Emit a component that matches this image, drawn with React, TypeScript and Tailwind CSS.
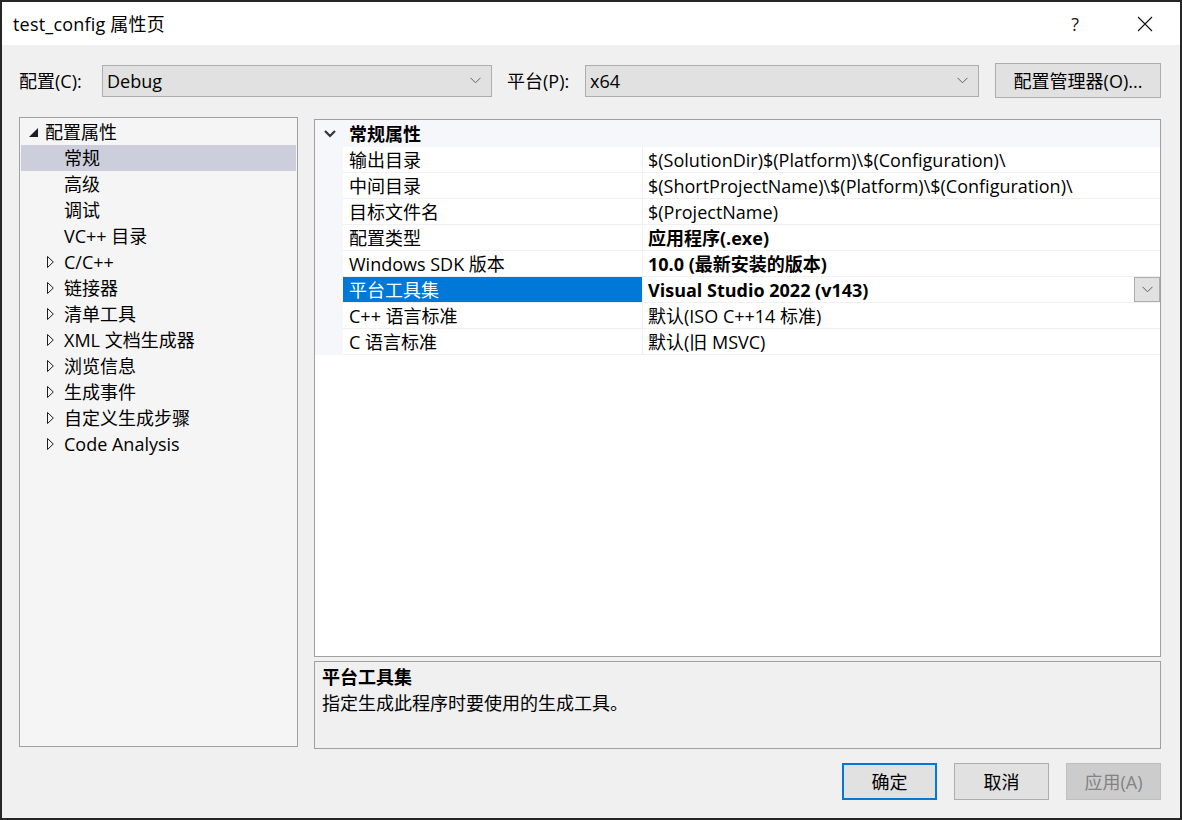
import { Fragment } from 'react';

const font = { fontFamily: '"Open Sans", "Noto Sans CJK SC", sans-serif' };

function Chevron({ className = '' }: { className?: string }) {
  return (
    <svg width="11" height="7" viewBox="0 0 11 7" className={className}>
      <path d="M0.5 0.8 L5.5 5.8 L10.5 0.8" fill="none" stroke="currentColor" strokeWidth="1" />
    </svg>
  );
}

function Combo({ value, width }: { value: string; width: string }) {
  return (
    <div className={`${width} h-[32px] bg-[#e1e1e1] border border-[#adadad] flex items-center justify-between pl-[4px] pr-[10px]`}>
      <span>{value}</span>
      <Chevron className="text-[#606060]" />
    </div>
  );
}

const tree: { label: string; level: 0 | 1 | 2; expander?: 'open' | 'closed'; selected?: boolean }[] = [
  { label: '配置属性', level: 0, expander: 'open' },
  { label: '常规', level: 1, selected: true },
  { label: '高级', level: 1 },
  { label: '调试', level: 1 },
  { label: 'VC++ 目录', level: 1 },
  { label: 'C/C++', level: 1, expander: 'closed' },
  { label: '链接器', level: 1, expander: 'closed' },
  { label: '清单工具', level: 1, expander: 'closed' },
  { label: 'XML 文档生成器', level: 1, expander: 'closed' },
  { label: '浏览信息', level: 1, expander: 'closed' },
  { label: '生成事件', level: 1, expander: 'closed' },
  { label: '自定义生成步骤', level: 1, expander: 'closed' },
  { label: 'Code Analysis', level: 1, expander: 'closed' },
];

const props: { name: string; value: string; bold?: boolean; selected?: boolean }[] = [
  { name: '输出目录', value: '$(SolutionDir)$(Platform)\\$(Configuration)\\' },
  { name: '中间目录', value: '$(ShortProjectName)\\$(Platform)\\$(Configuration)\\' },
  { name: '目标文件名', value: '$(ProjectName)' },
  { name: '配置类型', value: '应用程序(.exe)', bold: true },
  { name: 'Windows SDK 版本', value: '10.0 (最新安装的版本)', bold: true },
  { name: '平台工具集', value: 'Visual Studio 2022 (v143)', bold: true, selected: true },
  { name: 'C++ 语言标准', value: '默认(ISO C++14 标准)' },
  { name: 'C 语言标准', value: '默认(旧 MSVC)' },
];

export default function App() {
  return (
    <div style={font} className="w-[1182px] h-[820px] border-2 border-[#262626] bg-[#f0f0f0] text-[18px] leading-[26px] text-black flex flex-col overflow-hidden">
      {/* Title bar */}
      <div className="h-[43px] bg-white flex items-center shrink-0">
        <span className="ml-[11px] text-[18px] tracking-[0.2px]">test_config 属性页</span>
        <span className="ml-auto mr-[58px] text-[18px] text-[#1a1a1a]">?</span>
        <svg width="16" height="16" viewBox="0 0 16 16" className="mr-[27px]">
          <path d="M1 1 L15 15 M15 1 L1 15" stroke="#111" strokeWidth="1.1" />
        </svg>
      </div>

      <div className="flex-1 flex flex-col pl-[17px] pr-[19px]">
        {/* Config row */}
        <div className="flex items-center mt-[18px] h-[35px]">
          <span className="w-[83px]">配置(C):</span>
          <Combo value="Debug" width="w-[390px]" />
          <span className="ml-[15px] w-[78px]">平台(P):</span>
          <Combo value="x64" width="w-[394px]" />
          <button className="ml-[16px] w-[166px] h-[35px] bg-[#e1e1e1] border border-[#adadad] flex items-center justify-center">
            配置管理器(O)...
          </button>
        </div>

        {/* Main */}
        <div className="flex mt-[19px] gap-[16px]">
          {/* Tree */}
          <div className="w-[279px] h-[630px] bg-[#f5f5f5] border border-[#a0a0a0] p-[1px]">
            {tree.map((t) => (
              <div
                key={t.label}
                className={`h-[26px] flex items-center ${t.selected ? 'bg-[#cccedb]' : ''}`}
              >
                {t.level === 0 ? (
                  <div className="w-[24px] flex justify-end pr-[7px]">
                    <svg width="9" height="9" viewBox="0 0 9 9">
                      <path d="M9 0 L9 9 L0 9 Z" fill="#1e1e1e" />
                    </svg>
                  </div>
                ) : (
                  <div className="w-[43px] flex justify-end pr-[10px]">
                    {t.expander === 'closed' && (
                      <svg width="7" height="12" viewBox="0 0 7 12">
                        <path d="M0.5 0.5 L6.3 6 L0.5 11.5 Z" fill="none" stroke="#1e1e1e" strokeWidth="1" />
                      </svg>
                    )}
                  </div>
                )}
                <span>{t.label}</span>
              </div>
            ))}
          </div>

          {/* Right side */}
          <div className="flex-1 flex flex-col">
            <div className="h-[538px] mt-[2px] bg-white border border-[#a0a0a0] flex flex-col">
              <div className="h-[27px] bg-[#f5f7fb] flex items-center font-bold">
                <div className="w-[28px] flex justify-center pl-[1px]">
                  <svg width="12" height="8" viewBox="0 0 12 8">
                    <path d="M1 1 L6 6 L11 1" fill="none" stroke="#333" strokeWidth="2.2" />
                  </svg>
                </div>
                <span className="ml-[6px]">常规属性</span>
              </div>
              <div className="grid grid-cols-[28px_300px_1fr]">
                {props.map((p) => (
                  <Fragment key={p.name}>
                    <div className="h-[26px] bg-[#f5f7fb]" />
                    <div
                      className={`h-[26px] pl-[6px] border-b border-r border-[#f0f0f0] whitespace-nowrap ${
                        p.selected ? 'bg-[#0078d7] text-white' : ''
                      }`}
                    >
                      {p.name}
                    </div>
                    <div
                      className={`h-[26px] pl-[5px] border-b border-[#f0f0f0] whitespace-nowrap flex items-center ${
                        p.bold ? 'font-bold' : ''
                      }`}
                    >
                      <span className="flex-1">{p.value}</span>
                      {p.selected && (
                        <div className="w-[26px] h-[25px] bg-[#e1e1e1] border border-[#adadad] flex items-center justify-center">
                          <Chevron className="text-[#606060]" />
                        </div>
                      )}
                    </div>
                  </Fragment>
                ))}
              </div>
            </div>
            <div className="h-[88px] mt-[4px] bg-[#f0f0f0] border border-[#a0a0a0] px-[7px] pt-[2px]">
              <div className="font-bold">平台工具集</div>
              <div>指定生成此程序时要使用的生成工具。</div>
            </div>
          </div>
        </div>

        {/* Buttons */}
        <div className="flex justify-end gap-[17px] mt-[14px]">
          <button className="w-[95px] h-[37px] bg-[#e1e1e1] border-2 border-[#0078d7]">确定</button>
          <button className="w-[95px] h-[37px] bg-[#e1e1e1] border border-[#adadad]">取消</button>
          <button className="w-[95px] h-[37px] bg-[#cccccc] border border-[#bfbfbf] text-[#838383]">应用(A)</button>
        </div>
      </div>
    </div>
  );
}
